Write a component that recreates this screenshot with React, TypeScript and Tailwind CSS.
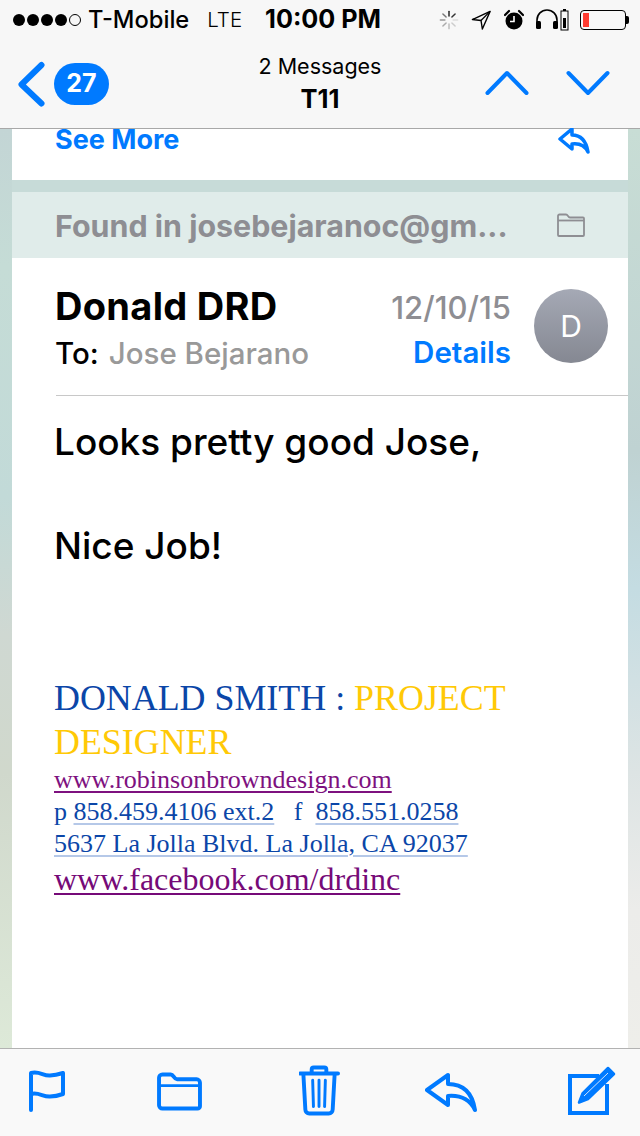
const blue = '#007aff';

function StatusBar() {
  return (
    <div className="h-10 flex items-center pl-[13px] pr-[14px] text-black">
      <div className="flex items-center gap-[2px]">
        {[0, 1, 2, 3].map((i) => (
          <span key={i} className="w-[12px] h-[12px] rounded-full bg-black" />
        ))}
        <span className="w-[12px] h-[12px] rounded-full border border-black" />
      </div>
      <span className="ml-[7px] text-[23.7px] font-medium">T-Mobile</span>
      <span className="ml-[18px] text-[20.5px] font-light">LTE</span>
      <span className="ml-[23px] text-[25.2px] font-bold">10:00 PM</span>
      <div className="ml-auto flex items-center">
        <svg width="20" height="20" viewBox="0 0 22 22" stroke="#555" strokeWidth="1.6" strokeLinecap="round">
          <path d="M11 1.5v5" stroke="#222" />
          <path d="M17.7 4.3l-3.5 3.5" stroke="#333" />
          <path d="M20.5 11h-5" stroke="#ddd" />
          <path d="M17.7 17.7l-3.5-3.5" stroke="#ccc" />
          <path d="M11 20.5v-5" stroke="#bbb" />
          <path d="M4.3 17.7l3.5-3.5" stroke="#aaa" />
          <path d="M1.5 11h5" stroke="#999" />
          <path d="M4.3 4.3l3.5 3.5" stroke="#777" />
        </svg>
        <svg className="ml-[12px]" width="20" height="20" viewBox="0 0 22 22" fill="none" stroke="#000" strokeWidth="1.5" strokeLinejoin="round">
          <path d="M21 1.5L1.5 10.5l9.5 1 1.5 9.5z" />
          <path d="M21 1.5L11 11.5" />
        </svg>
        <svg className="ml-[13px]" width="20" height="22" viewBox="0 0 20 22">
          <circle cx="10" cy="12" r="8.5" fill="#000" />
          <path d="M10 7v5.5H6" stroke="#fff" strokeWidth="1.6" fill="none" />
          <path d="M1 6l4-4M19 6l-4-4" stroke="#000" strokeWidth="2.2" strokeLinecap="round" />
        </svg>
        <svg className="ml-[11px]" width="24" height="22" viewBox="0 0 24 22" fill="none">
          <path d="M2 17V11a10 10 0 0120 0v6" stroke="#000" strokeWidth="1.6" />
          <rect x="1" y="12" width="5" height="8" rx="1.5" fill="#000" />
          <rect x="18" y="12" width="5" height="8" rx="1.5" fill="#000" />
        </svg>
        <svg className="ml-[1px]" width="9" height="22" viewBox="0 0 9 22" fill="none">
          <rect x="3" y="0" width="3" height="2" fill="#000" />
          <rect x="1" y="2" width="7" height="19" stroke="#000" strokeWidth="1" />
          <rect x="3" y="9" width="3" height="10" fill="#000" />
        </svg>
        <div className="ml-[11px] w-[46px] h-[20px] rounded-[4px] border border-black p-[2px] relative">
          <div className="w-[6px] h-full bg-[#ff3b30]" />
          <span className="absolute left-[45px] top-[5px] w-[3px] h-[8px] bg-black rounded-r-[2px]" />
        </div>
      </div>
    </div>
  );
}

function NavBar() {
  return (
    <div className="flex-1 grid grid-cols-[1fr_auto_1fr] items-start">
      <div className="flex items-start">
        <svg className="ml-[16px] mt-[21px]" width="30" height="46" viewBox="0 0 30 46" fill="none">
          <path d="M25.5 4L5.5 23.5 25.5 42.5" stroke={blue} strokeWidth="6" strokeLinecap="round" strokeLinejoin="round" />
        </svg>
        <div className="ml-[8px] mt-[23px] w-[55px] h-[42px] rounded-[21px] bg-[#007aff] text-white text-[25px] font-bold flex items-center justify-center">
          27
        </div>
      </div>
      <div className="text-center text-black pt-[12px]">
        <div className="text-[21.5px] leading-[28px] font-normal">2 Messages</div>
        <div className="text-[25.5px] leading-[38px] font-bold">T11</div>
      </div>
      <div className="flex items-center justify-end gap-[37px] pr-[30px] pt-[29px]">
        <svg width="44" height="28" viewBox="0 0 44 28" fill="none">
          <path d="M2.5 24L22 4l19.5 20" stroke={blue} strokeWidth="4" strokeLinecap="round" strokeLinejoin="round" />
        </svg>
        <svg width="44" height="28" viewBox="0 0 44 28" fill="none">
          <path d="M2.5 4L22 24 41.5 4" stroke={blue} strokeWidth="4" strokeLinecap="round" strokeLinejoin="round" />
        </svg>
      </div>
    </div>
  );
}

function Toolbar() {
  return (
    <div className="h-[88px] shrink-0 bg-[#f9f9f9] border-t border-[#b2b2b2] flex items-start text-[#007aff]">
      <svg className="ml-[28px] mt-[19px]" width="38" height="46" viewBox="0 0 38 44" fill="none" stroke={blue} strokeWidth="4" strokeLinecap="round" strokeLinejoin="round">
        <path d="M3 41V4c9-2 12 3 19 2.500 4-.2 8-1 13-2.500v21c-5 1.800-9 2.500-13 2.500-7 .5-11-4.500-19-2.500" />
      </svg>
      <svg className="ml-[91px] mt-[23px]" width="45" height="39" viewBox="0 0 46 40" fill="none" stroke={blue} strokeWidth="4" strokeLinejoin="round">
        <path d="M2 34V6a3.500 3.500 0 013.500-3.500H14c3 0 3.500 5 6.500 5H40.500A3.500 3.500 0 0144 11v24a2.500 2.500 0 01-2.500 2.500h-36A3.500 3.500 0 012 34z" />
        <path d="M2 14h42" strokeWidth="3" />
      </svg>
      <svg className="ml-[97px] mt-[16px]" width="41" height="52" viewBox="0 0 42 52" fill="none" stroke={blue} strokeWidth="4" strokeLinecap="round" strokeLinejoin="round">
        <path d="M1 8h39" />
        <path d="M13 7V4a2 2 0 012-2h11a2 2 0 012 2v3" />
        <path d="M4.500 9l2 36a4 4 0 004 4h20a4 4 0 004-4l2-36" />
        <path d="M14 15l.8 27M20.500 15v27M27 15l-.8 27" strokeWidth="3" />
      </svg>
      <svg className="ml-[85px] mt-[22px]" width="54" height="42" viewBox="0 0 54 42" fill="none" stroke={blue} strokeWidth="4" strokeLinecap="round" strokeLinejoin="round">
        <path d="M2 19L23 4v9c14 0 24 7 27 26-5-10-14-15-27-14v9z" />
      </svg>
      <svg className="ml-[88px] mt-[16px]" width="50" height="52" viewBox="0 0 50 52" fill="none">
        <path d="M32 11H3v37h37V19" stroke={blue} strokeWidth="4" strokeLinejoin="miter" />
        <path d="M41 3l6 6-26 25-9 3.500 3.500-9z" fill={blue} stroke={blue} strokeWidth="2.500" strokeLinejoin="round" />
        <path d="M17 31L41 8" stroke="#cfe4ff" strokeWidth="1" />
      </svg>
    </div>
  );
}

export default function App() {
  return (
    <div
      className="w-[640px] h-[1136px] overflow-hidden flex flex-col bg-white"
      style={{ fontFamily: 'Inter, "Noto Sans", sans-serif' }}
    >
      <header className="h-[129px] shrink-0 bg-[#f7f7f7] border-b border-[#a8a8a8] flex flex-col">
        <StatusBar />
        <NavBar />
      </header>

      <main className="flex-1 min-h-0 flex">
        {/* wallpaper shows through in the gutters either side of the cards */}
        <div className="w-[12px] shrink-0 bg-[linear-gradient(to_bottom,#c3d5d5_0%,#c5dcd6_15%,#c2dad8_40%,#cfd8d2_55%,#d0d8cc_70%,#dde9d8_100%)]" />

        <div className="flex-1 min-w-0 flex flex-col gap-[12px] bg-[#c7dbd8]">
          {/* Previous message, scrolled mostly out of view */}
          <div className="h-[51px] bg-white flex items-start justify-between pl-[43px] pr-[38px] shrink-0">
            <span className="text-[27px] leading-[22px] font-bold text-[#007aff] whitespace-nowrap">See More</span>
            <svg className="-mt-[1px]" width="32" height="26" viewBox="0 0 32 26" fill="none" stroke={blue} strokeWidth="3.500" strokeLinecap="round" strokeLinejoin="round">
              <path d="M2 11L14 1v6c8 0 14 5 16 17-3-6-8-9-16-8v5z" />
            </svg>
          </div>

          <div className="flex-1 min-h-0 bg-white flex flex-col">
            <div className="h-[66px] shrink-0 bg-[#e0ecea] flex items-center justify-between pl-[43px] pr-[43px]">
              <span className="text-[30.4px] leading-[38px] pt-[2px] font-bold text-[#8e8e93] whitespace-nowrap">Found in josebejaranoc@gm...</span>
              <svg width="28" height="24" viewBox="0 0 28 24" fill="none" stroke="#8e8e93" strokeWidth="1.800" strokeLinejoin="round">
                <path d="M1 22V3a1.500 1.500 0 011.500-1.500H9c2 0 2 3 4 3h13a1 1 0 011 1V22a1 1 0 01-1 1H2a1 1 0 01-1-1z" />
                <path d="M1 7.500h26" />
              </svg>
            </div>

            <div className="ml-[44px] h-[138px] shrink-0 border-b border-[#c8c8c8] flex pr-[20px]">
              <div className="flex-1 -ml-[1px] pt-[25px]">
                <div className="text-[38px] leading-[46px] font-bold text-black tracking-[0.3px]">Donald DRD</div>
                <div className="flex items-baseline mt-[6px] text-[29.5px] leading-[36px] font-medium">
                  <span className="text-black">To:</span>
                  <span className="ml-[10px] text-[#999999]">Jose Bejarano</span>
                </div>
              </div>
              <div className="pt-[33px] text-right">
                <div className="text-[31px] leading-[34px] font-medium text-[#8e8e93]">12/10/15</div>
                <div className="mt-[9px] text-[29.5px] leading-[36px] font-semibold text-[#007aff]">Details</div>
              </div>
              <div className="ml-[23px] mt-[31px] w-[74px] h-[74px] rounded-full bg-gradient-to-b from-[#a5a9b5] to-[#858892] text-white text-[30px] flex items-center justify-center">
                D
              </div>
            </div>

            <div className="pl-[42px] pt-[20px] text-black text-[37px] font-medium leading-[52px]">
              <p>Looks pretty good Jose,</p>
              <p className="mt-[52px]">Nice Job!</p>
            </div>

            <div className="pl-[42px] pt-[104px] pr-[100px]" style={{ fontFamily: '"Liberation Serif", serif' }}>
              <div className="text-[35.9px] leading-[44px] text-[#0b46a8]">
                DONALD SMITH : <span className="text-[#ffc906]">PROJECT DESIGNER</span>
              </div>
              <div className="text-[26px] leading-[30px] mt-[1px]">
                <a className="text-[#7e117f] underline decoration-[1.500px] underline-offset-[3px]">www.robinsonbrowndesign.com</a>
              </div>
              <div className="text-[26px] leading-[32px] mt-[1px] text-[#0b46a8] whitespace-pre">
                p <a className="underline decoration-2 decoration-[#b5c8e8] underline-offset-[3px]">858.459.4106 ext.2</a>
                {'   f  '}
                <a className="underline decoration-2 decoration-[#b5c8e8] underline-offset-[3px]">858.551.0258</a>
              </div>
              <div className="text-[26px] leading-[32px] text-[#0b46a8]">
                <a className="underline decoration-2 decoration-[#b5c8e8] underline-offset-[3px]">5637 La Jolla Blvd. La Jolla, CA 92037</a>
              </div>
              <div className="text-[32px] leading-[40px] -mt-[1px]">
                <a className="text-[#760a78] underline decoration-2 underline-offset-[3px]">www.facebook.com/drdinc</a>
              </div>
            </div>
          </div>
        </div>

        <div className="w-[12px] shrink-0 bg-[linear-gradient(to_bottom,#c8ddd5_0%,#bfd2d2_35%,#c4dce2_50%,#dde4e4_70%,#ececea_85%,#eeeeea_100%)]" />
      </main>

      <Toolbar />
    </div>
  );
}
